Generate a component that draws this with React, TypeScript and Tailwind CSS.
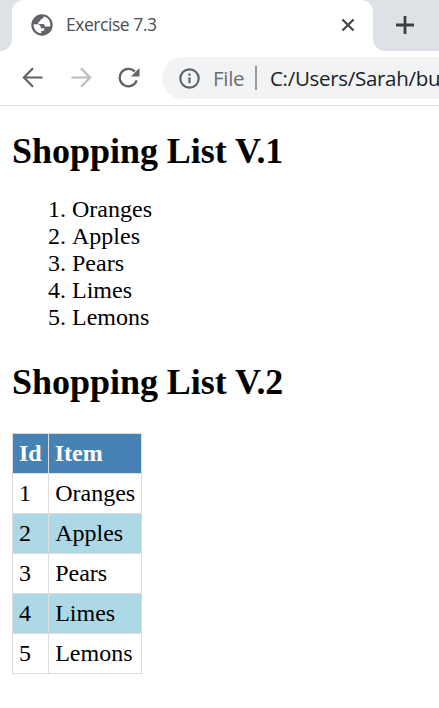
import React from "react";

const items = ["Oranges", "Apples", "Pears", "Limes", "Lemons"];

function Globe() {
  return (
    <svg className="h-[22px] w-[22px] shrink-0" viewBox="0 0 22 22">
      <circle cx="11" cy="11" r="10.700" fill="#5f6368" />
      <path
        d="M12.500 2.600C12.500 4.600 11.500 5.300 9.500 5.400L9.300 7.300 7.300 8v1.900h4.600c1.500.2 1.900 1.200 2 2.600h5.300C20 7.500 17 3.200 12.500 2.600zM2.700 10.200c-.4 4.800 3 8.600 7.500 9.100v-2.200h1.800c1.300-.4 1.600-1.500 1.200-2.900H10c-.3-2.500-1.200-3.800-3.200-4z"
        fill="#fff"
      />
    </svg>
  );
}

function BrowserChrome() {
  return (
    <header className="font-['Open_Sans',sans-serif]">
      <div className="flex h-[51px] bg-white">
        <div className="w-3 shrink-0 rounded-br-xl bg-[#dee1e6]" />
        <div className="flex w-[361px] shrink-0 bg-[#dee1e6]">
          <div className="flex w-full items-center rounded-t-xl bg-white pb-px pl-[19px] pr-[18px]">
            <Globe />
            <span className="ml-[13px] whitespace-nowrap pb-px text-[17.5px] tracking-[-0.45px] text-[#4b4f53]">
              Exercise 7.3
            </span>
            <svg className="ml-auto h-[14px] w-[14px]" viewBox="0 0 14 14">
              <path d="M1.500 1.500l11 11M12.500 1.500l-11 11" stroke="#45494d" strokeWidth="2.300" />
            </svg>
          </div>
        </div>
        <div className="flex flex-1 items-center rounded-bl-xl bg-[#dee1e6] pb-px pl-[23px]">
          <svg className="h-[18px] w-[18px]" viewBox="0 0 18 18">
            <path d="M9 0v18M0 9h18" stroke="#3c4043" strokeWidth="2.800" />
          </svg>
        </div>
      </div>
      <div className="flex h-[55px] items-center overflow-hidden border-b border-[#d9dbde] bg-white pl-[22px]">
        <svg className="h-[22px] w-[22px] shrink-0" viewBox="0 0 22 22" fill="none">
          <path d="M20.500 10.500H2.500M11 1.300L1.900 10.500l9.100 9.200" stroke="#5f6368" strokeWidth="2.200" />
        </svg>
        <svg className="ml-[26px] h-[22px] w-[22px] shrink-0" viewBox="0 0 22 22" fill="none">
          <path d="M1.500 10.500h18M11 1.300l9.100 9.200-9.100 9.200" stroke="#babcbe" strokeWidth="2.200" />
        </svg>
        <svg className="ml-[26px] h-[22px] w-[22px] shrink-0" viewBox="0 0 22 22" fill="none">
          <path d="M18.700 13.300A8.700 8.700 0 1 1 16.800 4.600" stroke="#5f6368" strokeWidth="2.300" />
          <path d="M21.500 1v8.500H13z" fill="#5f6368" />
        </svg>
        <div className="ml-[22px] flex h-[42px] w-[277px] shrink-0 items-center rounded-l-full bg-[#f1f3f4] pl-[17px] text-[20.5px]">
          <svg className="h-[21px] w-[21px] shrink-0" viewBox="0 0 21 21" fill="none">
            <circle cx="10.500" cy="10.500" r="9.200" stroke="#5f6368" strokeWidth="2.200" />
            <path d="M10.500 9.300v6M10.500 5.500v2.300" stroke="#5f6368" strokeWidth="2.200" />
          </svg>
          <span className="ml-[13px] w-[33px] shrink-0 whitespace-nowrap pt-px tracking-[-0.3px] text-[#6b6f73]">File</span>
          <span className="ml-[9px] h-6 w-[2px] shrink-0 bg-[#9a9da0]" />
          <span className="ml-[13px] whitespace-nowrap pt-px tracking-[-0.3px] text-[#202124]">C:/Users/Sarah/bu</span>
        </div>
      </div>
    </header>
  );
}

export default function App() {
  return (
    <div className="h-[708px] w-full overflow-hidden bg-white text-black">
      <BrowserChrome />
      <main className="px-3 pt-[25px] font-['Liberation_Serif',serif] text-2xl leading-[27px]">
        <h2 className="text-[36px] font-bold leading-[40px] tracking-[-0.03px]">Shopping List V.1</h2>
        <ol className="mt-[25px] list-decimal pl-[60px]">
          {items.map((item) => (
            <li key={item}>{item}</li>
          ))}
        </ol>
        <h2 className="mt-[31px] text-[36px] font-bold leading-[40px] tracking-[-0.03px]">Shopping List V.2</h2>
        <table className="mt-[31px] border-collapse">
          <thead>
            <tr className="h-10 bg-[#4682b4] text-left text-white">
              <th className="border border-[#ddd] px-1.5 py-0">Id</th>
              <th className="border border-[#ddd] px-1.5 py-0">Item</th>
            </tr>
          </thead>
          <tbody>
            {items.map((item, i) => (
              <tr key={item} className="h-10 even:bg-[#add8e6]">
                <td className="border border-[#ddd] px-1.5 py-0">{i + 1}</td>
                <td className="border border-[#ddd] py-0 pl-[6.5px] pr-[5.5px]">{item}</td>
              </tr>
            ))}
          </tbody>
        </table>
      </main>
    </div>
  );
}
